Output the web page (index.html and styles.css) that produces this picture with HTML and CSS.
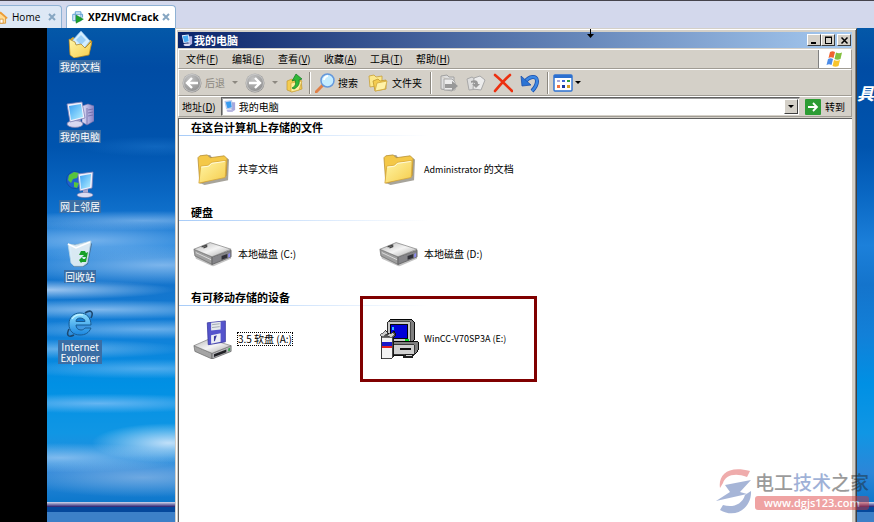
FILE: index.html
```html
<!DOCTYPE html>
<html lang="zh-CN">
<head>
    <meta charset="UTF-8">
    <meta name="viewport" content="width=device-width, initial-scale=1.0">
    <title>我的电脑</title>
    <link rel="stylesheet" href="styles.css">
</head>
<body>
    <svg class="defs" aria-hidden="true">
        <defs>
            <linearGradient id="gFolder" x1="0" y1="0" x2="1" y2="1"><stop offset="0" stop-color="#fff6a8"/><stop offset="1" stop-color="#f6cc4a"/></linearGradient>
            <linearGradient id="gScreen" x1="0" y1="0" x2="1" y2="1"><stop offset="0" stop-color="#3aa0f4"/><stop offset="1" stop-color="#b4f0ff"/></linearGradient>
            <linearGradient id="gCase" x1="0" y1="0" x2="1" y2="0"><stop offset="0" stop-color="#e6e4fa"/><stop offset="1" stop-color="#8480c4"/></linearGradient>
            <linearGradient id="gMetal" x1="0" y1="0" x2="1" y2="1"><stop offset="0" stop-color="#b8b8b8"/><stop offset=".5" stop-color="#f4f4f4"/><stop offset="1" stop-color="#a4a4a4"/></linearGradient>
            <radialGradient id="gBall" cx=".4" cy=".3" r=".8"><stop offset="0" stop-color="#c4c4c4"/><stop offset="1" stop-color="#868686"/></radialGradient>
            <linearGradient id="gIe" x1="0" y1="0" x2="0" y2="1"><stop offset="0" stop-color="#8ee0ff"/><stop offset="1" stop-color="#1a86e0"/></linearGradient>
        </defs>
        <symbol id="pc" viewBox="0 0 28 28">
            <path d="M16 6l6-2 6 2v15l-7 4-5-3z" fill="url(#gCase)" stroke="#7470a8" stroke-width=".6"/>
            <path d="M21 8v17M22 10l5-1M22 13l5-1M22 16l5-1" stroke="#6c68a4" stroke-width=".8" fill="none"/>
            <path d="M8 19l6-1 1 4H8z" fill="#a8a6d0"/>
            <ellipse cx="9" cy="24" rx="8" ry="3.4" fill="#d8d8f0" stroke="#7c7aa8" stroke-width=".7"/>
            <path d="M1 4l15-2 3 16-15 4z" fill="#f0f0fc" stroke="#7c80b8" stroke-width=".8"/>
            <path d="M3 6l12-2 2 13-12 3z" fill="url(#gScreen)"/>
        </symbol>
        <symbol id="folder" viewBox="0 0 34 34">
            <path d="M3 32V6l3-3 8-1 3 4 14-1 3 2-1 22-25 5z" fill="#6c6858" opacity=".6"/>
            <path d="M1 5l2-2 8-1 3 3 15-2 3 3-1 18L3 32z" fill="#f4c848" stroke="#b48c30" stroke-width=".8"/>
            <path d="M2 32l2-18 8-1 3-3 16-2-1 18z" fill="url(#gFolder)" stroke="#d4a438" stroke-width=".8"/>
            <path d="M4.500 15l8-1 3-3 14-2" stroke="#fffbe0" stroke-width="1" fill="none"/>
        </symbol>
        <symbol id="drive" viewBox="0 0 42 26">
            <path d="M2 14l18 9 20-7v2L21 26 3 18z" fill="#888" opacity=".5"/>
            <path d="M1 8l19 8v8L2 15z" fill="#a0a0a0" stroke="#666" stroke-width=".7"/>
            <path d="M20 16l20-7v7l-20 8z" fill="#848488" stroke="#555" stroke-width=".7"/>
            <path d="M1 8L18 1l22 7-20 8z" fill="url(#gMetal)" stroke="#777" stroke-width=".7"/>
            <path d="M9 5.500l6-2M11 6.500l4-1.500" stroke="#444" stroke-width="1.300"/>
            <path d="M30 15l6-2v4l-6 2z" fill="#303038"/>
            <path d="M37 13l2-1v4l-2 1z" fill="#8888f0"/>
            <path d="M3 11.500l16 7.500" stroke="#ddd" stroke-width="1"/>
        </symbol>
    </svg>

    <nav class="tabs">
        <a class="tab" href="#">
            <svg class="tab-icon" viewBox="0 0 16 16"><path d="M2 8v7h11V8L7 3z" fill="#ffdc94" stroke="#d8902c"/><path d="M-1 9l8-7 8 7" fill="none" stroke="#ee9c34" stroke-width="2"/><path d="M6 15v-5h4v5z" fill="#fff" stroke="#d8902c"/></svg>
            <span>Home</span>
            <svg class="tab-close" viewBox="0 0 8 8"><path d="M1 1l6 6M7 1L1 7"/></svg>
        </a>
        <a class="tab active" href="#">
            <svg class="tab-icon" viewBox="0 0 16 16"><path d="M4 4V1h7v3M1 12V4h3M11 4h2v4M4 4h7v8H4zM1 12h5" fill="#e4f2fc" stroke="#5c9cd0" stroke-width="1.200"/><path d="M5 5l9 5-9 5z" fill="#1ca02c" stroke="#0c7c1c" stroke-width=".6"/></svg>
            <span>XPZHVMCrack</span>
            <svg class="tab-close" viewBox="0 0 8 8"><path d="M1 1l6 6M7 1L1 7"/></svg>
        </a>
    </nav>

    <main class="screen">
        <div class="shortcuts sky">
            <a class="shortcut" href="#">
                <svg viewBox="0 0 28 28"><path d="M3 10l4-3 3 2 15 1 1 3-3 12-15 2-4-3z" fill="#d8a830"/><path d="M6 11L15 1l9 10-9 11z" fill="#d4eeff" stroke="#88bce8" stroke-width=".7"/><path d="M10 10l5-5 5 5-5 5z" fill="#9cd0f8"/><path d="M3 9l6 3 1 3 5-1 4 4 7-7-3 14-15 3-4-3z" fill="url(#gFolder)" stroke="#a87c20" stroke-width=".7"/></svg>
                <span>我的文档</span>
            </a>
            <a class="shortcut" href="#">
                <svg viewBox="0 0 28 28"><use href="#pc"/></svg>
                <span>我的电脑</span>
            </a>
            <a class="shortcut" href="#">
                <svg viewBox="0 0 28 28"><circle cx="9" cy="10" r="8.500" fill="#2060d0" stroke="#104090" stroke-width=".6"/><path d="M3 5l5-3 5 1-2 5-4 1-2 4-3-3zM8 12l5 1-2 5-3-1z" fill="#58c43c"/><path d="M17 19l5 0v4h-5z" fill="#a8a6d0"/><ellipse cx="19" cy="25" rx="8" ry="2.600" fill="#dcdcf2" stroke="#7c7aa8" stroke-width=".6"/><path d="M12 4l15-2-1 16-12 3z" fill="#f0f0fc" stroke="#7c80b8" stroke-width=".8"/><path d="M14 6l11-2-1 13-9 2z" fill="url(#gScreen)"/></svg>
                <span>网上邻居</span>
            </a>
            <a class="shortcut" href="#">
                <svg viewBox="0 0 28 28"><path d="M5 5l19-3 2 2-4 20-5 3H8l-2-3z" fill="#405870" opacity=".6"/><path d="M2 4l7 1 16-4-4 22-4 3H8l-3-3z" fill="#eaf6fc" fill-opacity=".9" stroke="#b8d4e4" stroke-width=".8"/><path d="M2 4l8 4 14-6" fill="none" stroke="#fff" stroke-width="1.400"/><path d="M13 15l2-4h4l1 2 2-1-1 5h-5l2-2h-2zM21 17l-1 5h-4l-1 1-2-3 3-3 1 2h2l1-2z" fill="#18a028"/></svg>
                <span>回收站</span>
            </a>
            <a class="shortcut" href="#">
                <svg viewBox="0 0 28 28"><path d="M8 25c-6 3-8 0-5-6M19 3c6-4 9-1 6 5" fill="none" stroke="#1c4870" stroke-width="1.600"/><path d="M14 3c6.500 0 11 4.500 11 12H10c0 3 2 5 5 5 2 0 3-1 4-2h6c-2 5-6 7-11 7C7 25 3 21 3 14S8 3 14 3zm0 5c-2.500 0-4 1.500-4 3.500h9C19 9.500 17 8 14 8z" fill="url(#gIe)" fill-rule="evenodd" stroke="#185c94" stroke-width="1"/><path d="M6 9c3-4 7-5 11-4" fill="none" stroke="#c8f4ff" stroke-width="1.200"/></svg>
                <span>Internet Explorer</span>
            </a>
        </div>

        <section class="window">
            <header class="titlebar">
                <svg class="small-icon" viewBox="0 0 14 14"><path d="M8 2h5v9l-4 2z" fill="#b0b0e0"/><path d="M1 1l8-1 1 9-7 1z" fill="#e8f0ff"/><path d="M2 2l6-1 1 7-5 1z" fill="#48acf4"/><ellipse cx="7" cy="12" rx="4" ry="1.500" fill="#dcdcf4"/></svg>
                <h1>我的电脑</h1>
                <div class="controls">
                    <button type="button" aria-label="最小化"><svg viewBox="0 0 11 9"><path d="M2 7h5" stroke="#000" stroke-width="2"/></svg></button>
                    <button type="button" aria-label="最大化"><svg viewBox="0 0 11 9"><path d="M2 1.500h7M2 7.500h7M2.500 1v7M8.500 1v7M2 1h7" stroke="#000" fill="none"/></svg></button>
                    <button type="button" aria-label="关闭"><svg viewBox="0 0 11 9"><path d="M2.500 1.500l6 6M8.500 1.500l-6 6" stroke="#000" stroke-width="1.500"/></svg></button>
                </div>
            </header>

            <div class="menubar">
                <div class="menus">
                    <button type="button">文件(<u>F</u>)</button>
                    <button type="button">编辑(<u>E</u>)</button>
                    <button type="button">查看(<u>V</u>)</button>
                    <button type="button">收藏(<u>A</u>)</button>
                    <button type="button">工具(<u>T</u>)</button>
                    <button type="button">帮助(<u>H</u>)</button>
                </div>
                <div class="flag">
                    <svg viewBox="0 0 18 16"><path d="M4 1c2-1 3-1 5 0L7.500 7c-2-1-3-1-5 0z" fill="#f06430"/><path d="M10 1.500c2 1 4 1 6 0L14.500 8c-2 1-4 1-6 0z" fill="#84c040"/><path d="M2 8c2-1 3-1 5 0l-1.500 6c-2-1-3-1-5 0z" fill="#4c8ce8"/><path d="M8 9c2 1 4 1 6 0l-1.500 6c-2 1-4 1-6 0z" fill="#f8c42c"/></svg>
                </div>
            </div>

            <div class="toolbar">
                <button type="button" class="tool" disabled><svg viewBox="0 0 20 20"><circle cx="10" cy="10" r="9.500" fill="url(#gBall)"/><circle cx="10" cy="10" r="8.500" fill="none" stroke="#d4d4d4" stroke-width=".7"/><path d="M16 10H5M10 5l-5 5 5 5" fill="none" stroke="#fff" stroke-width="2.400"/></svg><span>后退</span></button>
                <button type="button" class="caret dim" aria-label="后退列表"></button>
                <button type="button" class="tool" disabled aria-label="前进"><svg viewBox="0 0 20 20"><circle cx="10" cy="10" r="9.500" fill="url(#gBall)"/><circle cx="10" cy="10" r="8.500" fill="none" stroke="#d4d4d4" stroke-width=".7"/><path d="M4 10h11M10 5l5 5-5 5" fill="none" stroke="#fff" stroke-width="2.400"/></svg></button>
                <button type="button" class="caret dim" aria-label="前进列表"></button>
                <button type="button" class="tool" aria-label="向上"><svg viewBox="0 0 20 20"><path d="M2 8l5-2 2 2 7-1 1 9-10 3-5-2z" fill="#f4cc50" stroke="#c09830" stroke-width=".7"/><path d="M6 10l11-2-3 9-8 2z" fill="#fff0a0" stroke="#d0a840" stroke-width=".7"/><path d="M7 15c4-2 4-5 3-8l-3 1 4-7 6 5-3 1c1 4-1 7-5 9z" fill="#30b838" stroke="#107820" stroke-width=".7"/></svg></button>
                <span class="divider"></span>
                <button type="button" class="tool"><svg viewBox="0 0 20 20"><path d="M8 12l-7 7" stroke="#e08048" stroke-width="3" stroke-linecap="round"/><circle cx="12.500" cy="7.500" r="6.500" fill="#c4ecff" stroke="#6498dc" stroke-width="1.500"/><path d="M9 7c0-2 2-4 4-4" stroke="#fff" stroke-width="1.800" fill="none"/></svg><span>搜索</span></button>
                <button type="button" class="tool folders"><svg viewBox="0 0 20 20"><path d="M1 3l5-1 2 2 6-1v9L2 14z" fill="#fce88c" stroke="#c8a038" stroke-width=".8"/><path d="M5 8l5-2 2 2 6-1v9L7 18z" fill="#f4cc50" stroke="#c09830" stroke-width=".8"/><path d="M7 18l2-8 10-2-2 8z" fill="#fff2a8" stroke="#d0a840" stroke-width=".8"/></svg><span>文件夹</span></button>
                <span class="divider wide"></span>
                <button type="button" class="tool plain" disabled aria-label="移至"><svg viewBox="0 0 20 20"><path d="M2 3l6-1 2 2 5 0v4M2 3v13l11 2v-3" fill="#dedede" stroke="#a0a0a0"/><path d="M5 6h8l3 3v8H5z" fill="#ececec" stroke="#a8a8a8"/><path d="M6 11h7V8l6 5-6 5v-3H6z" fill="#989898"/></svg></button>
                <button type="button" class="tool plain" disabled aria-label="复制到"><svg viewBox="0 0 20 20"><path d="M1 6l5-2 3 2h5l-2 10-9 1z" fill="#dedede" stroke="#a8a8a8"/><path d="M8 5l6-2 5 4-4 10-8-1z" fill="#ececec" stroke="#a8a8a8"/><path d="M5 8c5-2 7 0 7 3h2l-4 4-4-4h3c0-1-2-2-4-1z" fill="#989898"/></svg></button>
                <button type="button" class="tool plain" aria-label="删除"><svg viewBox="0 0 20 20"><path d="M2 2c6 5 11 10 17 16M17 2C11 7 7 12 2 18" fill="none" stroke="#ec3010" stroke-width="2.600" stroke-linecap="round"/></svg></button>
                <button type="button" class="tool plain" aria-label="撤消"><svg viewBox="0 0 20 20"><path d="M5 9c4-6 12-7 12-1 0 4-2 7-5 10" fill="none" stroke="#1c50ac" stroke-width="4"/><path d="M5 9c4-6 12-7 12-1 0 4-2 7-5 10" fill="none" stroke="#3c88e4" stroke-width="2.400"/><path d="M1 3l1 10 9-1z" fill="#2c74d4" stroke="#1c50ac" stroke-width=".8"/></svg></button>
                <span class="divider last"></span>
                <button type="button" class="tool" aria-label="查看方式"><svg viewBox="0 0 20 20"><rect x="1" y="2" width="18" height="16" rx="1" fill="#fff" stroke="#2c70d0" stroke-width="1.400"/><path d="M1 3.500h18" stroke="#2c70d0" stroke-width="3"/><path d="M4 7h3v2H4z" fill="#a8a8d8"/><path d="M9 7h3v2H9z" fill="#4068d8"/><path d="M14 7h3v2h-3z" fill="#30a040"/><path d="M4 12h3v3H4z" fill="#f07040"/><path d="M9 12h3v3H9z" fill="#1838a0"/><path d="M14 12h3v3h-3z" fill="#d8a020"/></svg></button>
                <button type="button" class="caret small" aria-label="查看列表"></button>
            </div>

            <div class="addressbar">
                <label for="address">地址(<u>D</u>)</label>
                <div class="combo">
                    <svg class="small-icon" viewBox="0 0 14 14"><path d="M8 2h5v9l-4 2z" fill="#a8a8dc"/><path d="M1 1l8-1 1 9-7 1z" fill="#d0dcf8" stroke="#90a0d0" stroke-width=".5"/><path d="M2 2l6-1 1 7-5 1z" fill="#389cf0"/><ellipse cx="7" cy="12" rx="4" ry="1.500" fill="#b8b8e0"/></svg>
                    <select id="address"><option>我的电脑</option></select>
                    <span class="drop"></span>
                </div>
                <button type="button" class="go"><svg viewBox="0 0 16 16"><rect width="16" height="16" rx="1" fill="#2c9c34"/><path d="M3 8h9M8 4l4 4-4 4" fill="none" stroke="#fff" stroke-width="1.800"/></svg><span>转到</span></button>
            </div>

            <div class="content">
                <section class="group">
                    <h2>在这台计算机上存储的文件</h2>
                    <div class="items">
                        <a class="item" href="#"><svg viewBox="0 0 34 34"><use href="#folder"/></svg><span>共享文档</span></a>
                        <a class="item" href="#"><svg viewBox="0 0 34 34"><use href="#folder"/></svg><span><span lang="en">Administrator</span> 的文档</span></a>
                    </div>
                </section>
                <section class="group">
                    <h2>硬盘</h2>
                    <div class="items">
                        <a class="item" href="#"><svg viewBox="0 0 42 26"><use href="#drive"/></svg><span>本地磁盘 (C:)</span></a>
                        <a class="item" href="#"><svg viewBox="0 0 42 26"><use href="#drive"/></svg><span>本地磁盘 (D:)</span></a>
                    </div>
                </section>
                <section class="group">
                    <h2>有可移动存储的设备</h2>
                    <div class="items">
                        <a class="item" href="#">
                            <svg viewBox="0 0 42 42"><path d="M1 28l19 8v6L2 34z" fill="#a4a4a4" stroke="#666" stroke-width=".7"/><path d="M20 36l20-8v6l-20 8z" fill="#b4b4b8" stroke="#555" stroke-width=".7"/><path d="M1 28l16-7 23 7-20 8z" fill="url(#gMetal)" stroke="#777" stroke-width=".7"/><path d="M22 37l13-5v3l-13 5z" fill="#202024"/><path d="M37 31l2-1v3l-2 1z" fill="#38a048"/><path d="M15 4l19-2v22l-18 3z" fill="#5454cc" stroke="#34349c" stroke-width=".8"/><path d="M19 4l10-1v8l-10 1z" fill="#e4e8ec"/><path d="M20 6l8-1M20 9l8-1" stroke="#a0a8b0"/><path d="M19 17l10-2v9l-10 2z" fill="#eceef4"/><path d="M22 18l3-1-2 6-1 .5z" fill="#3838a0"/></svg>
                            <span class="focused">3.5 软盘 (A:)</span>
                        </a>
                        <a class="item marked" href="#">
                            <svg viewBox="0 0 42 42" shape-rendering="crispEdges"><path d="M9 3l4-3h21l3 3v19l-4 4H9z" fill="#808080" stroke="#000"/><path d="M9 3h24v21H9z" fill="#c8c8c8" stroke="#333" stroke-width=".8"/><path d="M12 6h18v14H12z" fill="#0000d8" stroke="#000"/><path d="M14 8h2v4h-2z" fill="#30b8ff"/><path d="M27 21h4v2h-4z" fill="#00d820"/><path d="M12 27l4-3h25v9l-4 5H12z" fill="#808080" stroke="#000"/><path d="M12 27h25v10H12z" fill="#d0d0d0" stroke="#222" stroke-width=".8"/><path d="M22 30h12v3H22z" fill="#111"/><path d="M25 39l3-2h10l-3 4H25z" fill="#222"/><path d="M28 38h7" stroke="#ddd"/><path d="M3 17l4-5 4 4 5-3 2 4-3 3v20l-3 2H3z" fill="#555" stroke="#111"/><path d="M3 19h11v22H3z" fill="#f4f4f4" stroke="#444" stroke-width=".8"/><path d="M3 24h11v4H3z" fill="#1818c8"/><path d="M3 28h11v2H3z" fill="#e02020"/><path d="M1 17l6-5 2 3-5 4zM8 17l7-3 1 3-3 3z" fill="#ccc" stroke="#333" stroke-width=".7"/></svg>
                            <span lang="en">WinCC-V70SP3A (E:)</span>
                        </a>
                    </div>
                </section>
            </div>
            <svg class="pointer" viewBox="0 0 9 11"><path d="M4.500 0v8" stroke="#000"/><path d="M1 5h7L4.500 9z" fill="#000"/></svg>
        </section>

        <div class="edge sky"><span>具</span></div>
    </main>

    <div class="watermark">
        <svg viewBox="0 0 36 46"><path d="M4 20C2 7 12-3 34 3l-3 6C18 4 9 8 7 15z" fill="#dc4848"/><path d="M9 17l26-5-11 12 7 2-31 7 14-9z" fill="#3c5ca8"/><path d="M35 23c1 15-14 29-31 19l3-5c9 3 19 0 22-10z" fill="#3c5ca8"/></svg>
        <div>
            <p class="brand">电工<b>技术</b>之家</p>
            <p class="site">www.dgjs123.com</p>
        </div>
    </div>
</body>
</html>
```
FILE: styles.css
```css
*, *::before, *::after {
    box-sizing: border-box;
}
body {
    margin: 0;
    height: 100vh;
    display: flex;
    flex-direction: column;
    overflow: hidden;
    position: relative;
    background: #000;
    color: #000;
    font-family: "Noto Sans CJK SC", sans-serif;
    font-size: 10px;
    line-height: 12px;
}
button, select {
    font: inherit;
    color: inherit;
    background: none;
    border: 0;
    padding: 0;
    margin: 0;
}
a {
    color: inherit;
    text-decoration: none;
}
h1, h2, p {
    margin: 0;
}
svg {
    display: block;
    flex: none;
}
.defs {
    position: absolute;
    width: 0;
    height: 0;
}

/* tabs */
.tabs {
    flex: none;
    display: flex;
    gap: 4px;
    height: 28px;
    padding-top: 4px;
    background: #d3d8ec;
    border-top: 1px solid #45434c;
}
.tab {
    display: flex;
    align-items: center;
    gap: 4px;
    padding: 0 5px;
    background: #dde8f5;
    border: 1px solid #8fb2d4;
    border-bottom: 0;
    border-radius: 0 4px 0 0;
    font-family: "Open Sans", sans-serif;
    font-size: 10px;
}
.tab:first-child {
    width: 68px;
    padding-left: 0;
    margin-left: -6px;
}
.tab.active {
    width: 110px;
    background: #fff;
    border-radius: 4px 4px 0 0;
    gap: 3px;
    font-weight: bold;
}
.tab-icon {
    width: 13px;
    height: 13px;
}
.tab-close {
    width: 8px;
    height: 8px;
    margin-left: auto;
    stroke: #86a6c2;
    stroke-width: 2;
}

/* desktop */
.screen {
    flex: 1;
    min-height: 0;
    display: flex;
    padding-left: 47px;
}
.sky {
    background: linear-gradient(#0458a8 0%, #004ca4 8%, #0054ae 24%, #0a68c4 34%, #1c80da 44%, #1474cc 52%, #1280d8 62%, #0090e4 72%, #1096e4 82%, #2c86d8 90%, #0c78cc 96%, #c8d0e8 96%, #201468 97%, #04489c 97%, #04489c 98%, #3c80c8 98%);
}
/* clouds */
.shortcuts {
    flex: none;
    width: 128px;
    padding-top: 2px;
    background:
        radial-gradient(ellipse 120% 2% at 75% 39%, rgba(190, 220, 252, .5), transparent),
        radial-gradient(ellipse 110% 4% at 35% 43%, rgba(200, 226, 255, .5), transparent),
        radial-gradient(ellipse 130% 4% at 90% 48%, rgba(190, 220, 252, .6), transparent),
        radial-gradient(ellipse 100% 2% at 0% 53%, rgba(215, 232, 255, .7), transparent),
        radial-gradient(ellipse 120% 2% at 40% 57%, rgba(200, 226, 255, .6), transparent),
        radial-gradient(ellipse 120% 2% at 80% 61%, rgba(190, 222, 255, .5), transparent),
        radial-gradient(ellipse 100% 2% at 10% 65%, rgba(180, 216, 250, .5), transparent),
        radial-gradient(ellipse 110% 2% at 80% 69%, rgba(150, 204, 250, .5), transparent),
        radial-gradient(ellipse 110% 2% at 40% 76%, rgba(140, 196, 248, .7), transparent),
        radial-gradient(ellipse 60% 4% at 95% 84%, rgba(235, 243, 255, .8), transparent),
        radial-gradient(ellipse 100% 3% at 10% 87%, rgba(190, 218, 250, .6), transparent),
        radial-gradient(ellipse 100% 4% at 75% 91%, rgba(140, 184, 230, .7), transparent),
        radial-gradient(ellipse 60% 2% at 85% 24%, rgba(40, 130, 215, .4), transparent),
        linear-gradient(#0458a8 0%, #004ca4 8%, #0054ae 24%, #0a68c4 34%, #1c80da 44%, #1474cc 52%, #1280d8 62%, #0090e4 72%, #1096e4 82%, #2c86d8 90%, #0c78cc 96%, #c8d0e8 96%, #201468 97%, #04489c 97%, #04489c 98%, #3c80c8 98%);
}
.shortcut {
    display: flex;
    flex-direction: column;
    align-items: center;
    gap: 2px;
    width: 66px;
    height: 70px;
    color: #fff;
    text-align: center;
}
.shortcut svg {
    width: 28px;
    height: 28px;
}
.shortcut span {
    padding: 1px;
    max-width: 44px;
    background: #3a6ea5;
    line-height: 11px;
}
.edge {
    flex: none;
    width: 17px;
    padding-top: 50px;
    color: #fff;
    font-size: 17px;
    font-weight: bold;
    font-style: italic;
    line-height: 30px;
}

/* explorer window */
.window {
    flex: 1;
    min-width: 0;
    position: relative;
    display: flex;
    flex-direction: column;
    padding: 2px 4px 0 2px;
    background: #d4d0c8;
    border: 1px solid #d4d0c8;
    border-right: 1px solid #404040;
    border-bottom: 0;
    box-shadow: inset 1px 1px #fff, inset -1px 0 #808080;
}
.titlebar {
    flex: none;
    display: flex;
    align-items: center;
    gap: 1px;
    height: 16px;
    margin-top: 1px;
    padding: 0 1px 0 3px;
    background: linear-gradient(90deg, #0a246a, #a6caf0);
    color: #fff;
}
.titlebar h1 {
    font-size: 11px;
    line-height: 14px;
}
.small-icon {
    width: 12px;
    height: 13px;
}
.controls {
    display: flex;
    margin-left: auto;
}
.controls button {
    width: 14px;
    height: 12px;
    padding: 1px;
    background: #d4d0c8;
    border: 1px solid;
    border-color: #fff #404040 #404040 #fff;
}
.controls button:last-child {
    margin-left: 2px;
}
.controls svg {
    width: 11px;
    height: 9px;
}
.menubar, .toolbar, .addressbar {
    flex: none;
    display: flex;
    align-items: center;
    border: 1px solid;
    border-color: #fff #a09c94 #a09c94 #fff;
}
.menubar {
    height: 20px;
    margin-top: 1px;
    align-items: stretch;
}
.menus {
    flex: 1;
    display: flex;
    padding-left: 7px;
}
.menus button {
    width: 46px;
    text-align: left;
}
.flag {
    display: flex;
    align-items: center;
    justify-content: center;
    width: 33px;
    background: #fff;
    border-left: 1px solid #808080;
}
.flag svg {
    width: 18px;
    height: 16px;
}
.toolbar {
    height: 27px;
    padding-left: 3px;
}
.tool {
    display: flex;
    align-items: center;
    gap: 3px;
}
.tool svg {
    width: 20px;
    height: 20px;
}
.tool:disabled {
    color: #8c8880;
}
.caret {
    width: 20px;
    height: 20px;
    display: flex;
    align-items: center;
    justify-content: center;
}
.caret::before, .drop::before {
    content: "";
    width: 6px;
    height: 3px;
    background: #000;
    clip-path: polygon(0 0, 100% 0, 50% 100%);
}
.caret.dim::before {
    background: #8c8880;
}
.caret.small {
    width: 10px;
}
.folders {
    margin-left: 10px;
    gap: 4px;
}
.plain {
    margin-right: 7px;
}
.divider {
    width: 2px;
    height: 22px;
    margin: 0 4px;
    border-left: 1px solid #8c8880;
    border-right: 1px solid #fff;
}
.divider.wide {
    margin: 0 7px 0 8px;
}
.divider.last {
    margin-left: 0;
}
.addressbar {
    height: 21px;
    gap: 5px;
    padding: 0 6px 0 3px;
}
.combo {
    flex: 1;
    display: flex;
    align-items: center;
    height: 19px;
    padding-left: 2px;
    background: #fff;
    border: 1px solid;
    border-color: #606060 #d4d0c8 #d4d0c8 #606060;
    box-shadow: inset 1px 1px #a0a0a0;
}
.combo select {
    flex: 1;
    align-self: stretch;
    margin-left: -12px;
    padding-left: 15px;
    appearance: none;
    outline: none;
}
.drop {
    display: flex;
    align-items: center;
    justify-content: center;
    width: 14px;
    height: 15px;
    margin-right: 1px;
    background: #d4d0c8;
    border: 1px solid;
    border-color: #fff #404040 #404040 #fff;
    pointer-events: none;
}
.go {
    display: flex;
    align-items: center;
    gap: 4px;
}
.go svg {
    width: 16px;
    height: 16px;
}

/* file groups */
.content {
    flex: 1;
    min-height: 0;
    margin-top: 1px;
    overflow: hidden;
    background: #fff;
    border-top: 1px solid #606060;
    border-left: 1px solid #606060;
}
.group h2 {
    height: 17px;
    padding-left: 12px;
    font-size: 11px;
    line-height: 17px;
    background: linear-gradient(90deg, #a8ccf8, #fff 250px) bottom / 100% 1px no-repeat;
}
.items {
    display: grid;
    grid-template-columns: 186px 186px;
    height: 66px;
    margin-bottom: 2px;
    padding-left: 14px;
}
.item {
    display: flex;
    align-items: center;
    gap: 5px;
    position: relative;
}
.item svg {
    width: 40px;
    height: 40px;
}
.item svg[viewBox="0 0 34 34"] {
    height: 32px;
}
.item [lang="en"] {
    font-size: 9px;
}
.focused {
    outline: 1px dotted #000;
}
.marked::after {
    content: "";
    position: absolute;
    left: -19px;
    top: -10px;
    width: 177px;
    height: 86px;
    border: 3px solid #800000;
}
.pointer {
    position: absolute;
    left: 410px;
    top: 0;
    width: 9px;
    height: 11px;
}

/* site mark */
.watermark {
    position: absolute;
    right: 5px;
    bottom: 8px;
    display: flex;
    align-items: flex-end;
    gap: 3px;
    opacity: .45;
}
.watermark svg {
    width: 36px;
    height: 46px;
}
.brand {
    color: #222;
    font-size: 19px;
    font-weight: 500;
    line-height: 24px;
}
.brand b {
    color: #2c54a8;
    font-weight: inherit;
}
.site {
    margin: 2px 0 4px;
    background: #dc3434;
    border-radius: 3px;
    color: #fff;
    font-family: "Open Sans", sans-serif;
    font-size: 11px;
    font-weight: 600;
    line-height: 14px;
    text-align: center;
}
```
